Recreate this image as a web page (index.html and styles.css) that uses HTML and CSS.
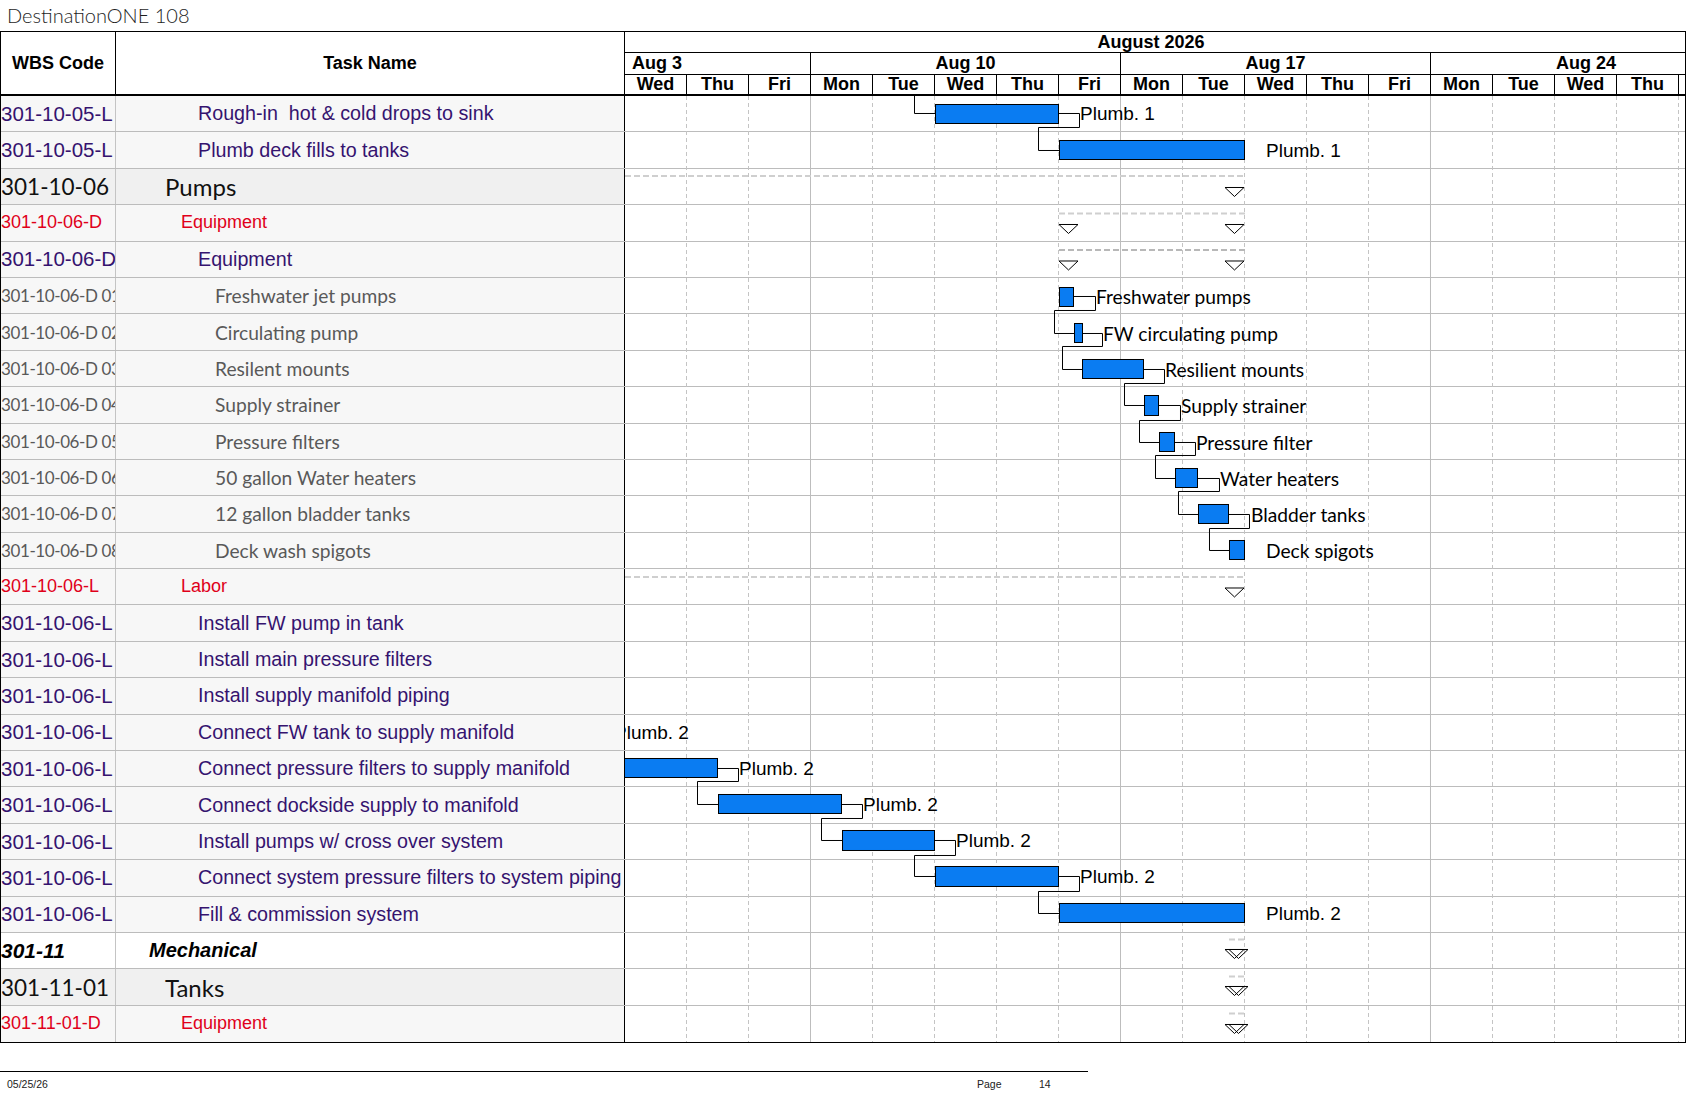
FILE: index.html
```html
<!DOCTYPE html>
<html>
<head>
<meta charset="utf-8">
<title>DestinationONE 108</title>
<link rel="stylesheet" href="styles.css">
</head>
<body>
<div class="title">DestinationONE 108</div>
<div class="sheet">
  <div class="head">
    <div class="h-wbs">WBS Code</div>
    <div class="h-task">Task Name</div>
    <div class="timescale">
      <div class="t-month">August 2026</div>
      <div class="t-weeks">
        <div class="t-week w-first"><span>Aug 3</span></div>
        <div class="t-week w-full"><span>Aug 10</span></div>
        <div class="t-week w-full"><span>Aug 17</span></div>
        <div class="t-week w-last"><span>Aug 24</span></div>
      </div>
      <div class="t-days">
        <div class="t-day">Wed</div><div class="t-day">Thu</div><div class="t-day">Fri</div>
        <div class="t-day">Mon</div><div class="t-day">Tue</div><div class="t-day">Wed</div><div class="t-day">Thu</div><div class="t-day">Fri</div>
        <div class="t-day">Mon</div><div class="t-day">Tue</div><div class="t-day">Wed</div><div class="t-day">Thu</div><div class="t-day">Fri</div>
        <div class="t-day">Mon</div><div class="t-day">Tue</div><div class="t-day">Wed</div><div class="t-day">Thu</div>
        <div class="t-day t-rest"></div>
      </div>
    </div>
  </div>
  <div class="body">
    <div class="row r-purple"><div class="c-wbs">301-10-05-L</div><div class="c-task">Rough-in  hot &amp; cold drops to sink</div><div class="c-gantt"></div></div>
    <div class="row r-purple"><div class="c-wbs">301-10-05-L</div><div class="c-task">Plumb deck fills to tanks</div><div class="c-gantt"></div></div>
    <div class="row r-sum"><div class="c-wbs">301-10-06</div><div class="c-task">Pumps</div><div class="c-gantt"></div></div>
    <div class="row r-red"><div class="c-wbs">301-10-06-D</div><div class="c-task">Equipment</div><div class="c-gantt"></div></div>
    <div class="row r-purple"><div class="c-wbs">301-10-06-D</div><div class="c-task">Equipment</div><div class="c-gantt"></div></div>
    <div class="row r-gray"><div class="c-wbs">301-10-06-D 010</div><div class="c-task">Freshwater jet pumps</div><div class="c-gantt"></div></div>
    <div class="row r-gray"><div class="c-wbs">301-10-06-D 020</div><div class="c-task">Circulating pump</div><div class="c-gantt"></div></div>
    <div class="row r-gray"><div class="c-wbs">301-10-06-D 030</div><div class="c-task">Resilent mounts</div><div class="c-gantt"></div></div>
    <div class="row r-gray"><div class="c-wbs">301-10-06-D 040</div><div class="c-task">Supply strainer</div><div class="c-gantt"></div></div>
    <div class="row r-gray"><div class="c-wbs">301-10-06-D 050</div><div class="c-task">Pressure filters</div><div class="c-gantt"></div></div>
    <div class="row r-gray"><div class="c-wbs">301-10-06-D 060</div><div class="c-task">50 gallon Water heaters</div><div class="c-gantt"></div></div>
    <div class="row r-gray"><div class="c-wbs">301-10-06-D 070</div><div class="c-task">12 gallon bladder tanks</div><div class="c-gantt"></div></div>
    <div class="row r-gray"><div class="c-wbs">301-10-06-D 080</div><div class="c-task">Deck wash spigots</div><div class="c-gantt"></div></div>
    <div class="row r-red"><div class="c-wbs">301-10-06-L</div><div class="c-task">Labor</div><div class="c-gantt"></div></div>
    <div class="row r-purple"><div class="c-wbs">301-10-06-L</div><div class="c-task">Install FW pump in tank</div><div class="c-gantt"></div></div>
    <div class="row r-purple"><div class="c-wbs">301-10-06-L</div><div class="c-task">Install main pressure filters</div><div class="c-gantt"></div></div>
    <div class="row r-purple"><div class="c-wbs">301-10-06-L</div><div class="c-task">Install supply manifold piping</div><div class="c-gantt"></div></div>
    <div class="row r-purple"><div class="c-wbs">301-10-06-L</div><div class="c-task">Connect FW tank to supply manifold</div><div class="c-gantt"></div></div>
    <div class="row r-purple"><div class="c-wbs">301-10-06-L</div><div class="c-task">Connect pressure filters to supply manifold</div><div class="c-gantt"></div></div>
    <div class="row r-purple"><div class="c-wbs">301-10-06-L</div><div class="c-task">Connect dockside supply to manifold</div><div class="c-gantt"></div></div>
    <div class="row r-purple"><div class="c-wbs">301-10-06-L</div><div class="c-task">Install pumps w/ cross over system</div><div class="c-gantt"></div></div>
    <div class="row r-purple"><div class="c-wbs">301-10-06-L</div><div class="c-task">Connect system pressure filters to system piping</div><div class="c-gantt"></div></div>
    <div class="row r-purple"><div class="c-wbs">301-10-06-L</div><div class="c-task">Fill &amp; commission system</div><div class="c-gantt"></div></div>
    <div class="row r-group"><div class="c-wbs">301-11</div><div class="c-task">Mechanical</div><div class="c-gantt"></div></div>
    <div class="row r-sum"><div class="c-wbs">301-11-01</div><div class="c-task">Tanks</div><div class="c-gantt"></div></div>
    <div class="row r-red"><div class="c-wbs">301-11-01-D</div><div class="c-task">Equipment</div><div class="c-gantt"></div></div>

    <svg class="gantt-layer" viewBox="625 96 1060 946.4" width="1060" height="946.4" xmlns="http://www.w3.org/2000/svg">
      <g stroke="#c4c4c4" stroke-width="1" stroke-dasharray="4 3" fill="none">
        <path d="M686.5 96V1043M748.5 96V1043M872.5 96V1043M934.5 96V1043M996.5 96V1043M1058.5 96V1043M1182.5 96V1043M1244.5 96V1043M1306.5 96V1043M1368.5 96V1043M1492.5 96V1043M1554.5 96V1043M1616.5 96V1043M1678.5 96V1043"/>
      </g>
      <g stroke="#bdbdbd" stroke-width="1" fill="none">
        <path d="M810.5 96V1043M1120.5 96V1043M1430.5 96V1043"/>
      </g>

      <!-- summary dashed lines -->
      <g stroke="#cfcfcf" stroke-width="2" stroke-dasharray="6 3" fill="none">
        <path d="M625 176H1245"/>
        <path d="M1059 213.5H1245"/>
        <path d="M625 577H1245"/>
        <path d="M1229 939.5H1245M1229 976.5H1245M1229 1013.5H1245"/>
      </g>
      <path d="M1059 250H1245" stroke="#b8b8b8" stroke-width="2" stroke-dasharray="6 3" fill="none"/>

      <!-- summary markers -->
      <g fill="#fff" stroke="#000" stroke-width="1">
        <polygon points="1225,187.5 1244,187.5 1234.5,196.5"/>
        <polygon points="1059,224.5 1078,224.5 1068.5,233.5"/>
        <polygon points="1225,224.5 1244,224.5 1234.5,233.5"/>
        <polygon points="1059,261 1078,261 1068.5,270"/>
        <polygon points="1225,261 1244,261 1234.5,270"/>
        <polygon points="1225,588 1244,588 1234.5,597"/>
      </g>
      <g fill="none" stroke="#000" stroke-width="1">
        <polygon points="1225,949.5 1244,949.5 1234.5,958.5"/>
        <polygon points="1229,949.5 1248,949.5 1238.5,958.5"/>
        <polygon points="1225,986.5 1244,986.5 1234.5,995.5"/>
        <polygon points="1229,986.5 1248,986.5 1238.5,995.5"/>
        <polygon points="1225,1024.5 1244,1024.5 1234.5,1033.5"/>
        <polygon points="1229,1024.5 1248,1024.5 1238.5,1033.5"/>
      </g>

      <!-- links and connectors -->
      <g fill="none" stroke="#000" stroke-width="1">
        <path d="M914.5 96V113.5H935.5"/>
        <path d="M1058.5 113.5H1079.5V127.5H1038.5V150.5H1059.5"/>
        <path d="M1073.5 296.5H1095.5V310.5H1054.5V333.5H1074.5"/>
        <path d="M1082.5 333.5H1102.5V346.5H1062.5V369.5H1082.5"/>
        <path d="M1143.5 369.5H1164.5V383.5H1124.5V405.5H1144.5"/>
        <path d="M1158.5 405.5H1180.5V420.5H1139.5V442.5H1159.5"/>
        <path d="M1174.5 442.5H1195.5V455.5H1155.5V478.5H1175.5"/>
        <path d="M1197.5 478.5H1219.5V491.5H1178.5V514.5H1198.5"/>
        <path d="M1228.5 514.5H1249.5V528.5H1209.5V550.5H1229.5"/>
        <path d="M717.5 768.5H738.5V781.5H697.5V804.5H718.5"/>
        <path d="M841.5 804.5H862.5V818.5H821.5V840.5H842.5"/>
        <path d="M934.5 840.5H955.5V855.5H914.5V876.5H935.5"/>
        <path d="M1058.5 876.5H1079.5V891.5H1038.5V913.5H1059.5"/>
      </g>

      <!-- task bars -->
      <g fill="#0a7cf2" stroke="#000" stroke-width="1">
        <rect x="935.5" y="104.5" width="123" height="19"/>
        <rect x="1059.5" y="140.5" width="185" height="19"/>
        <rect x="1059.5" y="287.5" width="14" height="19"/>
        <rect x="1074.5" y="323.5" width="8" height="19"/>
        <rect x="1082.5" y="359.5" width="61" height="19"/>
        <rect x="1144.5" y="395.5" width="14" height="20"/>
        <rect x="1159.5" y="432.5" width="15" height="19"/>
        <rect x="1175.5" y="468.5" width="22" height="19"/>
        <rect x="1198.5" y="504.5" width="30" height="19"/>
        <rect x="1229.5" y="540.5" width="15" height="19"/>
        <rect x="600.5" y="758.5" width="117" height="19"/>
        <rect x="718.5" y="794.5" width="123" height="19"/>
        <rect x="842.5" y="830.5" width="92" height="20"/>
        <rect x="935.5" y="866.5" width="123" height="20"/>
        <rect x="1059.5" y="903.5" width="185" height="19"/>
      </g>

      <!-- bar labels -->
      <g class="lbl-res">
        <text x="1080" y="120.5">Plumb. 1</text>
        <text x="1266" y="157">Plumb. 1</text>
        <text x="614" y="739">Plumb. 2</text>
        <text x="739" y="775">Plumb. 2</text>
        <text x="863" y="811">Plumb. 2</text>
        <text x="956" y="847">Plumb. 2</text>
        <text x="1080" y="883">Plumb. 2</text>
        <text x="1266" y="920">Plumb. 2</text>
      </g>
      <g class="lbl-name">
        <text x="1096" y="304">Freshwater pumps</text>
        <text x="1103" y="341">FW circulating pump</text>
        <text x="1165" y="377">Resilient mounts</text>
        <text x="1181" y="413">Supply strainer</text>
        <text x="1196" y="450">Pressure filter</text>
        <text x="1220" y="486">Water heaters</text>
        <text x="1251" y="522">Bladder tanks</text>
        <text x="1266" y="558">Deck spigots</text>
      </g>
    </svg>
  </div>
</div>
<div class="footer">
  <div class="f-date">05/25/26</div>
  <div class="f-page">Page</div>
  <div class="f-num">14</div>
</div>
</body>
</html>
```
FILE: styles.css
```css
* { box-sizing: border-box; }
html, body { margin: 0; padding: 0; background: #fff; }
body {
  width: 1687px;
  height: 1097px;
  overflow: hidden;
  font-family: "Liberation Sans", Arial, sans-serif;
  color: #000;
}

.title {
  height: 31px;
  padding-left: 7px;
  font-family: Lato, "Liberation Sans", sans-serif;
  font-weight: 300;
  font-size: 20px;
  line-height: 30px;
  color: #1e1e1e;
}

.sheet {
  width: 1686px;
  border: 1px solid #000;
}

/* ---------- header ---------- */
.head {
  display: flex;
  height: 64px;
  border-bottom: 2px solid #000;
}
.h-wbs, .h-task {
  display: flex;
  align-items: center;
  justify-content: center;
  font-weight: bold;
  font-size: 18px;
  border-right: 1px solid #000;
}
.h-wbs { width: 115px; }
.h-task { width: 509px; }

.timescale {
  flex: 1;
  display: flex;
  flex-direction: column;
  font-weight: bold;
  font-size: 18px;
  min-width: 0;
}
.t-month {
  height: 21px;
  line-height: 20px;
  text-align: center;
  padding-right: 8px;
  border-bottom: 1px solid #000;
}
.t-weeks {
  height: 22px;
  display: flex;
  border-bottom: 1px solid #000;
}
.t-week {
  border-right: 1px solid #000;
  overflow: hidden;
  line-height: 21px;
  white-space: nowrap;
}
.t-week span { display: block; }
.w-first { width: 186px; padding-left: 7px; }
.w-full { width: 310px; text-align: center; }
.w-last { flex: 1; border-right: none; }
.w-last span { width: 310px; text-align: center; }

.t-days {
  height: 19px;
  display: flex;
}
.t-day {
  width: 62px;
  flex: none;
  line-height: 19px;
  text-align: center;
  border-right: 1px solid #000;
}
.t-rest { flex: 1; width: auto; border-right: none; }

/* ---------- body ---------- */
.body { position: relative; }
.row {
  display: flex;
  height: 36.4px;
  border-bottom: 1px solid #bcbcbc;
}
.row:last-of-type { border-bottom: none; }
.c-wbs, .c-task {
  display: flex;
  align-items: center;
  white-space: pre;
  overflow: hidden;
  background: #f7f7f7;
}
.c-wbs { width: 115px; border-right: 1px solid #c4c4c4; }
.c-task { width: 509px; border-right: 1px solid #000; }
.c-gantt { flex: 1; background: #fff; }

.r-purple .c-wbs { color: #35136f; font-size: 20.5px; }
.r-purple .c-task { color: #35136f; font-size: 19.7px; padding-left: 82px; }

.r-red .c-wbs { color: #e0001a; font-size: 18px; }
.r-red .c-task { color: #e0001a; font-size: 18px; padding-left: 65px; }

.r-gray .c-wbs, .r-gray .c-task {
  font-family: Lato, "Liberation Sans", sans-serif;
  color: #595959;
}
.r-gray .c-wbs { font-size: 17px; letter-spacing: -0.4px; }
.r-gray .c-task { font-size: 19.2px; padding-left: 99px; }

.r-sum .c-wbs, .r-sum .c-task {
  font-family: Lato, "Liberation Sans", sans-serif;
  color: #111;
  background: #f0f0f0;
}
.r-sum .c-wbs { font-size: 22.5px; }
.r-sum .c-task { font-size: 24px; padding-left: 49px; }

.r-group .c-wbs, .r-group .c-task {
  font-weight: bold;
  font-style: italic;
  background: #fff;
}
.r-group .c-wbs { font-size: 21px; }
.r-group .c-task { font-size: 20px; padding-left: 33px; }

.gantt-layer {
  position: absolute;
  left: 624px;
  top: 0;
  width: 1060px;
  height: 946.4px;
  overflow: hidden;
}
.lbl-res text {
  font-family: "Liberation Sans", Arial, sans-serif;
  font-size: 19px;
  fill: #000;
}
.lbl-name text {
  font-family: Lato, "Liberation Sans", sans-serif;
  font-size: 19.2px;
  fill: #000;
}

/* ---------- footer ---------- */
.footer {
  width: 1088px;
  margin-top: 28px;
  border-top: 1px solid #000;
  display: grid;
  grid-template-columns: 970px 62px 1fr;
  padding-left: 7px;
  padding-top: 6px;
  font-size: 10.5px;
  line-height: 12px;
  color: #222;
}
```
